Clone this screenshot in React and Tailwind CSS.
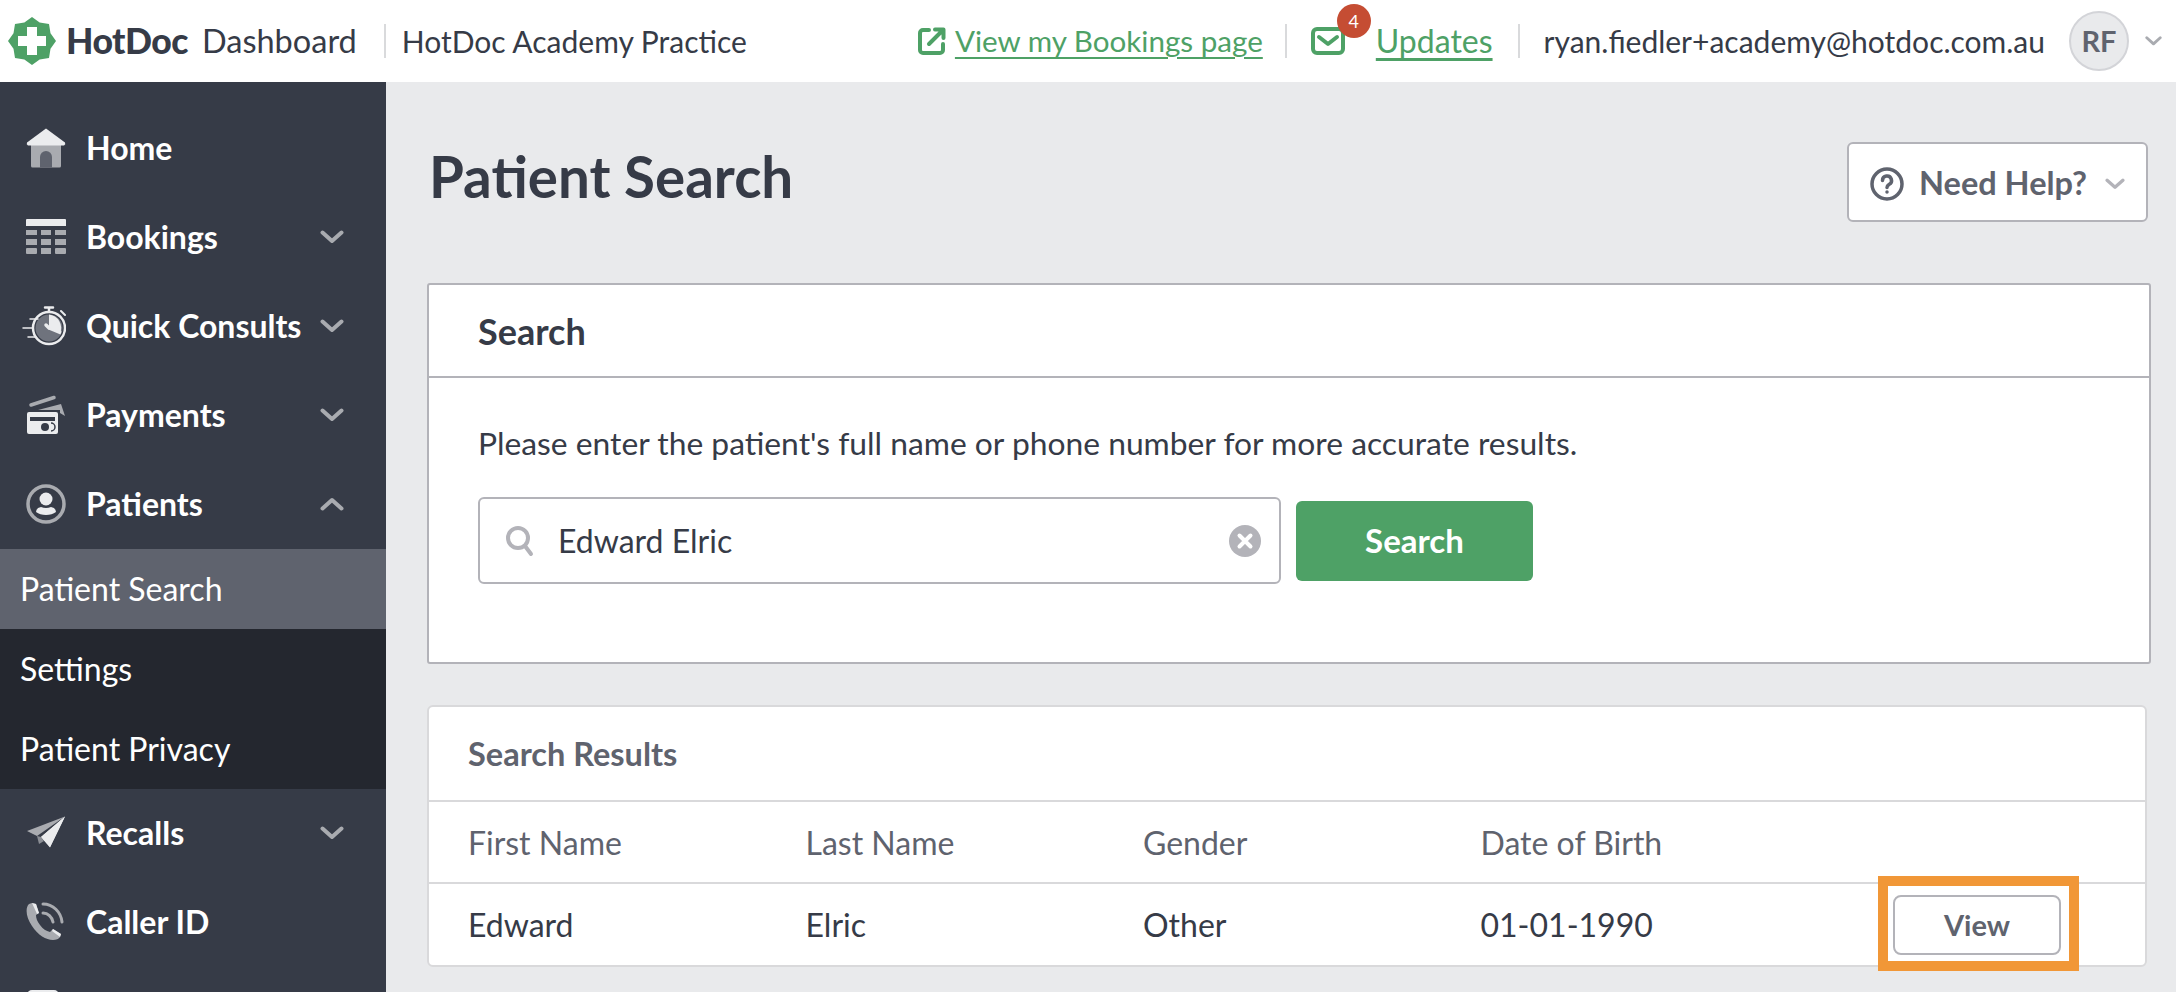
const Chevron = ({ up, className }) => (
  <svg viewBox="0 0 24 14" className={className} fill="none" stroke="currentColor" strokeWidth="4" strokeLinecap="round" strokeLinejoin="round">
    <path d={up ? 'M2.5 11.5 12 3l9.5 8.5' : 'M2.5 2.5 12 11l9.5-8.5'} />
  </svg>
)

const HomeIcon = () => (
  <svg viewBox="0 0 40 40" className="w-10 h-10">
    <path d="M5 16h30v22a1.500 1.500 0 0 1-1.500 1.500h-27A1.500 1.500 0 0 1 5 38z" fill="#a9abb0" />
    <path d="M14 39.500V29a6 6 0 0 1 12 0v10.500z" fill="#5f636e" />
    <path d="M20 0.500 1 14.500q-1 2 1 3h36q2-1 1-3z" fill="#ebecee" />
  </svg>
)

const BookingsIcon = () => (
  <svg viewBox="0 0 40 36" className="w-10 h-9">
    <path d="M1 0h38a1 1 0 0 1 1 1v6H0V1a1 1 0 0 1 1-1z" fill="#ebecee" />
    <g fill="#a9abb0">
      <rect x="0" y="11" width="11" height="5" />
      <rect x="15" y="11" width="10" height="5" />
      <rect x="29" y="11" width="11" height="5" />
      <rect x="0" y="20" width="11" height="6" />
      <rect x="15" y="20" width="10" height="6" />
      <rect x="29" y="20" width="11" height="6" />
      <rect x="0" y="29" width="11" height="6" rx="1" />
      <rect x="15" y="29" width="10" height="6" />
      <rect x="29" y="29" width="11" height="6" rx="1" />
    </g>
  </svg>
)

const ConsultIcon = () => (
  <svg viewBox="0 0 44 40" className="w-[44px] h-10 -ml-[4px]">
    <circle cx="27" cy="22" r="16" fill="none" stroke="#ebecee" strokeWidth="2.500" />
    <circle cx="27" cy="22" r="13.500" fill="#6f737d" />
    <path d="M27 22V8.500a13.500 13.500 0 0 1 11 19z" fill="#ebecee" />
    <path d="M27 22l12 5" stroke="#ebecee" strokeWidth="3" />
    <path d="M27 22l-3-3" stroke="#ebecee" strokeWidth="3.500" strokeLinecap="round" />
    <path d="M23 1.500h8M27 1.500v4" stroke="#ebecee" strokeWidth="2.500" strokeLinecap="round" />
    <path d="M39 5l4 4" stroke="#ebecee" strokeWidth="2" strokeLinecap="round" />
    <path d="M8 13h8M1 22h10M6 31h8" stroke="#ebecee" strokeWidth="1.500" strokeLinecap="round" />
  </svg>
)

const PaymentsIcon = () => (
  <svg viewBox="0 0 40 40" className="w-10 h-10">
    <path d="M5 10 28 2.500" stroke="#a9abb0" strokeWidth="3.500" strokeLinecap="round" />
    <path d="M12 15 35 9l4 12-5-3v-3z" fill="#a9abb0" />
    <rect x="1" y="17" width="31" height="22" rx="2" fill="#ebecee" />
    <rect x="4" y="22" width="25" height="4" fill="#363b47" />
    <circle cx="19" cy="32" r="4" fill="#363b47" />
    <path d="M25 28a4 4 0 0 1 0 8" fill="none" stroke="#363b47" strokeWidth="1.500" />
  </svg>
)

const PatientsIcon = () => (
  <svg viewBox="0 0 40 40" className="w-10 h-10">
    <circle cx="20" cy="20" r="18" fill="none" stroke="#a9abb0" strokeWidth="3.500" />
    <circle cx="20" cy="15" r="6.500" fill="#ebecee" />
    <path d="M10 28q0-4 5-5 5 2 10 0 5 1 5 5-4 3-10 3t-10-3z" fill="#ebecee" />
  </svg>
)

const RecallsIcon = () => (
  <svg viewBox="0 0 40 34" className="w-10 h-[34px]">
    <path d="M39 0.500 1 15l10 5z" fill="#a9abb0" />
    <path d="M39 0.500 15 21l9 10 z" fill="#ebecee" />
    <path d="M39 0.500 24 31.500 15 21z" fill="#ebecee" />
    <path d="M11 20l2 8 5-3-3-4z" fill="#8b8e95" />
  </svg>
)

const CallerIcon = () => (
  <svg viewBox="0 0 40 40" className="w-10 h-10">
    <path d="M3 2C-1 6 0 15 6 24s14 14 21 14c3 0 6-1 7-3l1-3-8-5-3 3c-4-1-7-3-10-7s-4-7-4-10l3-2-3-9L6 1z" fill="#a9abb0" />
    <path d="M6 1l4 1 3 9-2 1z M27 27l8 5-1 3-8-6z" fill="#ebecee" />
    <path d="M17 2c10 0 18 8 19 18" fill="none" stroke="#a9abb0" strokeWidth="3" strokeLinecap="round" />
    <path d="M17 11c5 0 9 4 10 9" fill="none" stroke="#a9abb0" strokeWidth="3" strokeLinecap="round" />
  </svg>
)

const NAV_TOP = [
  { label: 'Home', Icon: HomeIcon },
  { label: 'Bookings', Icon: BookingsIcon, chevron: 'down' },
  { label: 'Quick Consults', Icon: ConsultIcon, chevron: 'down' },
  { label: 'Payments', Icon: PaymentsIcon, chevron: 'down' },
  { label: 'Patients', Icon: PatientsIcon, chevron: 'up' },
]

const NavRow = ({ label, Icon, chevron }) => (
  <div className="h-[89px] flex items-center pl-[26px] text-white">
    <div className="w-10 flex justify-center shrink-0"><Icon /></div>
    <span className="ml-[20px] text-[32px] font-bold whitespace-nowrap">{label}</span>
    {chevron && <Chevron up={chevron === 'up'} className="absolute left-[320px] w-[24px] h-[14px] text-[#a9abb0]" />}
  </div>
)

const Divider = ({ className }) => <div className={`w-[2px] h-[34px] bg-[#d9dadc] ${className}`} />

const TopBar = () => (
  <header className="h-[82px] bg-white flex items-center shrink-0 text-[#363b47] text-[30px]">
    <svg viewBox="0 0 48 48" className="w-12 h-12 ml-2">
      <path d="M24 0l7.650 5.500L41 7l1.500 9.350L48 24l-5.500 7.650L41 41l-9.350 1.500L24 48l-7.650-5.500L7 41 5.500 31.650 0 24l5.500-7.650L7 7l9.350-1.500z" fill="#4ea166" />
      <path d="M19 10h10v9h9v10h-9v9H19v-9h-9V19h9z" fill="#fff" />
    </svg>
    <span className="ml-[10px] text-[35.5px] font-black tracking-[-0.5px]">HotDoc</span>
    <span className="ml-[14px] text-[32.5px]">Dashboard</span>
    <Divider className="ml-[27px]" />
    <span className="ml-[16px]">HotDoc Academy Practice</span>
    <div className="ml-auto flex items-center">
      <svg viewBox="0 0 28 28" className="w-7 h-7" fill="none" stroke="#4ea166" strokeWidth="4" strokeLinecap="round" strokeLinejoin="round">
        <path d="M11 3H5a3 3 0 0 0-3 3v17a3 3 0 0 0 3 3h17a3 3 0 0 0 3-3v-6" />
        <path d="M11 17 25 3M17 2.500h8.500V11" />
      </svg>
      <a className="ml-[9px] text-[29.6px] text-[#4ea166] underline underline-offset-[5px]">View my Bookings page</a>
      <Divider className="ml-[22px]" />
      <div className="relative ml-[24px] w-[34px] h-[28px]">
        <svg viewBox="0 0 34 28" className="w-[34px] h-[28px]" fill="none" stroke="#4ea166" strokeWidth="4" strokeLinecap="round" strokeLinejoin="round">
          <rect x="2" y="2" width="30" height="24" rx="4" />
          <path d="M8 10l9 7 9-7" />
        </svg>
        <span className="absolute left-[26px] -top-[23px] w-[34px] h-[34px] rounded-full bg-[#c54d33] text-white text-[18px] flex items-center justify-center">4</span>
      </div>
      <a className="ml-[31px] text-[32px] text-[#4ea166] underline underline-offset-[5px]">Updates</a>
      <Divider className="ml-[25px]" />
      <span className="ml-[24px]">ryan.fiedler+academy@hotdoc.com.au</span>
      <div className="ml-[24px] w-[60px] h-[60px] rounded-full bg-[#e9eaec] border-2 border-[#d3d4d8] flex items-center justify-center text-[29px] font-bold text-[#5f636e]">RF</div>
      <Chevron className="ml-[16px] mr-[14px] w-[17px] h-[10px] text-[#a9abb0]" />
    </div>
  </header>
)

const Sidebar = () => (
  <aside className="relative w-[386px] shrink-0 bg-[#363b47] pt-[21px] overflow-hidden">
    {NAV_TOP.map((item) => <NavRow key={item.label} {...item} />)}
    <div className="mt-[1px] bg-[#24272f] text-white text-[32px]">
      <div className="h-[80px] flex items-center pl-[20px] bg-[#5f636e]">Patient Search</div>
      <div className="h-[80px] flex items-center pl-[20px]">Settings</div>
      <div className="h-[80px] flex items-center pl-[20px]">Patient Privacy</div>
    </div>
    <div className="-mt-[1px]"><NavRow label="Recalls" Icon={RecallsIcon} chevron="down" /></div>
    <NavRow label="Caller ID" Icon={CallerIcon} />
    <div className="pl-[27px] pt-[24px]"><div className="w-[32px] h-[32px] rounded-t-[5px] bg-[#ebecee]" /></div>
  </aside>
)

const SearchCard = () => (
  <section className="mt-[61px] h-[381px] bg-white border-2 border-[#b3b3b9] rounded-[3px]">
    <div className="h-[93px] border-b-2 border-[#b3b3b9] flex items-center pl-[49px] text-[36px] font-bold text-[#363b47]">Search</div>
    <div className="pl-[49px] pt-[47px]">
      <p className="text-[31.8px] leading-[36px] text-[#363b47]">Please enter the patient's full name or phone number for more accurate results.</p>
      <div className="mt-[36px] flex items-center">
        <div className="w-[803px] h-[87px] border-2 border-[#b3b3b9] rounded-[6px] flex items-center pl-[25px] pr-[20px]">
          <svg viewBox="0 0 30 32" className="w-[30px] h-8" fill="none" stroke="#b3b3b9" strokeWidth="4" strokeLinecap="round">
            <circle cx="13" cy="13" r="10" />
            <path d="M20 21l6 8" />
          </svg>
          <span className="ml-[23px] text-[32px] text-[#363b47]">Edward Elric</span>
          <svg viewBox="0 0 32 32" className="ml-auto -mr-[2px] w-8 h-8">
            <circle cx="16" cy="16" r="16" fill="#b3b3b9" />
            <path d="M10.500 10.500l11 11m0-11-11 11" stroke="#fff" strokeWidth="4" strokeLinecap="round" />
          </svg>
        </div>
        <button className="ml-[15px] w-[237px] h-[80px] rounded-[6px] bg-[#4ea166] text-white text-[33px] font-bold">Search</button>
      </div>
    </div>
  </section>
)

const COL = 'w-[337.5px]'

const ResultsCard = () => (
  <section className="relative mt-[41px] mr-[4px] h-[262px] bg-white border-2 border-[#d9d9db] rounded-[6px] text-[32px] text-[#5f636e]">
    <div className="h-[95px] pt-[2px] border-b-2 border-[#d9d9db] flex items-center pl-[39px] text-[32.5px] font-bold">Search Results</div>
    <div className="h-[82px] pt-[2px] border-b-2 border-[#d9d9db] flex items-center pl-[39px]">
      <div className={COL}>First Name</div>
      <div className={COL}>Last Name</div>
      <div className={COL}>Gender</div>
      <div className={COL}>Date of Birth</div>
    </div>
    <div className="h-[81px] flex items-center pl-[39px] text-[#363b47]">
      <div className={COL}>Edward</div>
      <div className={COL}>Elric</div>
      <div className={COL}>Other</div>
      <div className={COL}>01-01-1990</div>
      <button className="ml-auto mr-[84px] w-[168px] h-[60px] border-2 border-[#b3b3b9] rounded-[8px] bg-white text-[29px] font-bold text-[#5f636e]">View</button>
    </div>
    <div className="absolute left-[1449px] top-[169px] w-[201px] h-[95px] border-[10px] border-[#f19737]" />
  </section>
)

export default function App() {
  return (
    <div className="h-[992px] flex flex-col overflow-hidden font-['Lato',sans-serif] bg-[#e9eaec]">
      <TopBar />
      <div className="flex flex-1 min-h-0">
        <Sidebar />
        <main className="flex-1 pl-[41px] pr-[25px] pt-[60px]">
          <div className="flex justify-between items-start">
            <h1 className="ml-[2px] -mt-[1px] text-[56.5px] leading-[70px] font-bold text-[#363b47]">Patient Search</h1>
            <button className="mr-[3px] w-[301px] h-[80px] pt-[3px] bg-white border-2 border-[#b3b3b9] rounded-[6px] flex items-center pl-[21px] text-[32.5px] font-bold text-[#5f636e]">
              <svg viewBox="0 0 34 34" className="w-[34px] h-[34px]" fill="none" stroke="#5f636e" strokeWidth="3.500">
                <circle cx="17" cy="17" r="15" />
                <path d="M12.500 13.500a4.500 4.500 0 1 1 6.500 4c-1.500 1-2 1.500-2 3" strokeLinecap="round" />
                <circle cx="17" cy="25" r="1" fill="#5f636e" strokeWidth="1.500" />
              </svg>
              <span className="ml-[15px]">Need Help?</span>
              <Chevron className="ml-[18px] w-5 h-3 text-[#b3b3b9]" />
            </button>
          </div>
          <SearchCard />
          <ResultsCard />
        </main>
      </div>
    </div>
  )
}
